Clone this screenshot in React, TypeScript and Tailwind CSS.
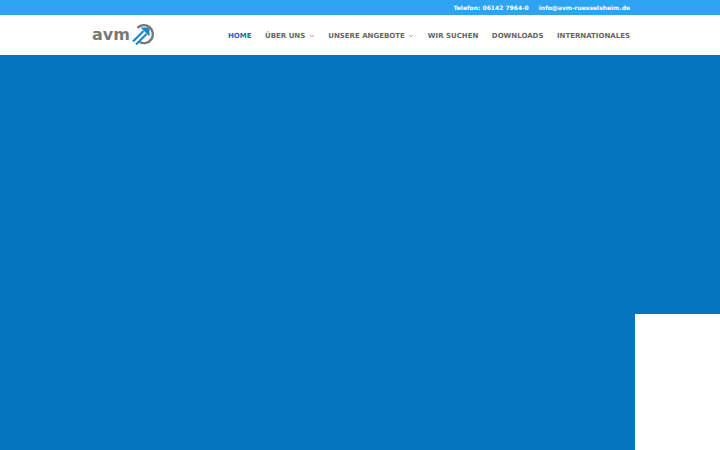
import { ChevronDown } from "lucide-react";

const font = { fontFamily: "'DejaVu Sans', sans-serif" };

function Logo() {
  return (
    <div className="flex items-center gap-[1px]">
      <span className="text-[16px] leading-none font-bold text-[#77787b]">avm</span>
      <svg width="24" height="24" viewBox="0 0 24 24" fill="none">
        <path d="M6.5 4.8A9 9 0 1 1 8.5 19" stroke="#77787b" strokeWidth="2.4" />
        <path d="M2 18.5 12.5 8" stroke="#1c86c8" strokeWidth="2.2" />
        <path d="M5 21.5 15.5 11" stroke="#1c86c8" strokeWidth="2.2" />
        <path d="M9.5 4.5h9v9z" fill="#1c86c8" />
      </svg>
    </div>
  );
}

function NavItem({ label, active, caret }: { label: string; active?: boolean; caret?: boolean }) {
  return (
    <span className={`flex items-center gap-[3.5px] text-[7px] font-bold ${active ? "text-[#0c71b5]" : "text-[#666666]"}`}>
      {label}
      {caret && <ChevronDown size={6} strokeWidth={2.5} />}
    </span>
  );
}

export default function App() {
  return (
    <div className="flex flex-col w-[720px] h-[450px] overflow-hidden bg-[#0475be]" style={font}>
      <div className="h-[15px] bg-[#2ea3f2] flex items-center justify-end gap-[10px] pr-[90px] text-[6px] font-bold text-white leading-none">
        <span>Telefon: 06142 7964-0</span>
        <span>info@avm-ruesselsheim.de</span>
      </div>
      <div className="h-[40px] bg-white flex items-center justify-between pl-[92px] pr-[90px]">
        <Logo />
        <div className="flex items-center gap-[13.5px] pt-[2px]">
          <NavItem label="HOME" active />
          <NavItem label="ÜBER UNS" caret />
          <NavItem label="UNSERE ANGEBOTE" caret />
          <NavItem label="WIR SUCHEN" />
          <NavItem label="DOWNLOADS" />
          <NavItem label="INTERNATIONALES" />
        </div>
      </div>
      <div className="flex-1 flex items-end justify-end">
        <div className="w-[85px] h-[136px] bg-white" />
      </div>
    </div>
  );
}
